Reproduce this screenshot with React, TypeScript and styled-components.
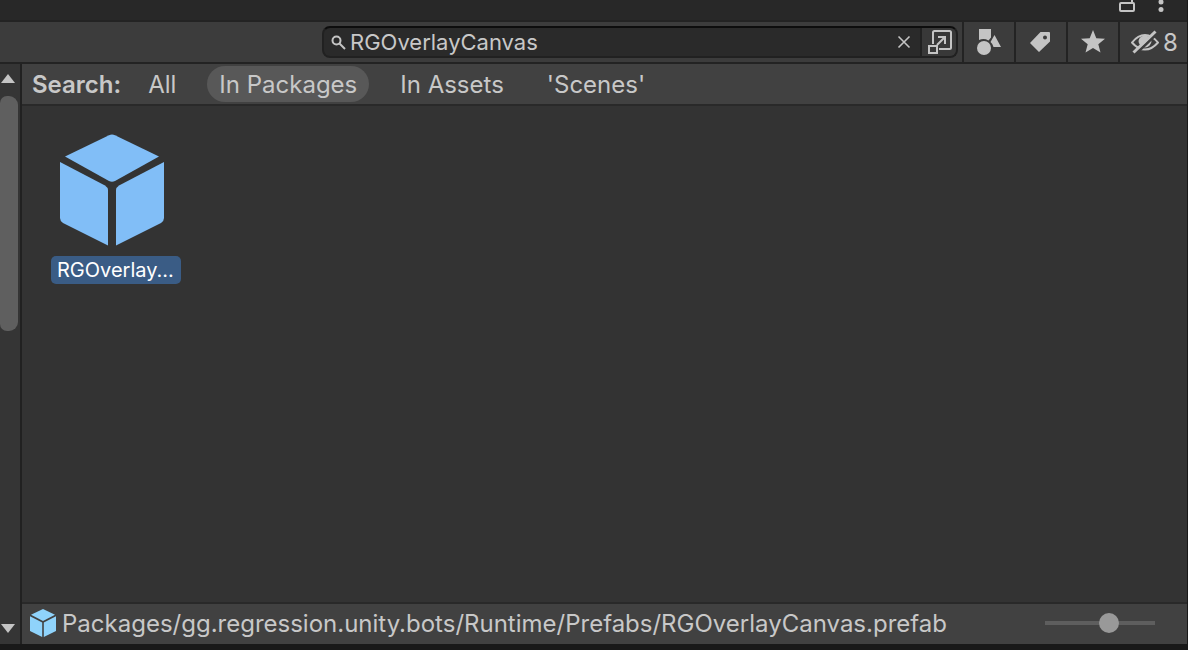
import React, { useState } from "react";
import styled, { createGlobalStyle } from "styled-components";

const GlobalStyle = createGlobalStyle`
  * { box-sizing: border-box; }
  body { margin: 0; background: #191919; }
  button, input { font: inherit; color: inherit; margin: 0; }
  button { border: 0; padding: 0; background: none; cursor: pointer; }
`;

const Window = styled.main`
  display: flex;
  flex-direction: column;
  min-height: 100vh;
  border-right: 1px solid #191919;
  border-bottom: 6px solid #191919;
  background: #333333;
  color: #c8c8c8;
  font: 400 24px/32px Inter, sans-serif;
`;

const TitleBar = styled.header`
  display: flex;
  justify-content: flex-end;
  gap: 15px;
  height: 22px;
  padding-right: 16px;
  background: #282828;
  border-bottom: 2px solid #232323;
`;

const TitleButton = styled.button`
  display: flex;
  height: 16px;
`;

const Toolbar = styled.div`
  display: flex;
  height: 42px;
  padding-left: 6px;
  background: #3c3c3c;
  border-bottom: 2px solid #232323;
`;

const Spacer = styled.div`
  flex: 1 1 0;
`;

const SearchField = styled.div`
  display: flex;
  flex: 2 1 0;
  align-items: center;
  height: 32px;
  margin: 4px 4px 0 0;
  overflow: hidden;
  background: #2a2a2a;
  border: 2px solid #212121;
  border-top-color: #0d0d0d;
  border-radius: 8px;
`;

const SearchLabel = styled.label`
  display: flex;
  flex: 1;
  align-items: center;
  gap: 4px;
  padding-left: 7px;
`;

const SearchInput = styled.input`
  flex: 1;
  min-width: 0;
  height: 28px;
  padding: 0;
  border: 0;
  outline: 0;
  background: transparent;
  font-size: 22px;
`;

const ClearButton = styled.button`
  display: flex;
  align-items: center;
  justify-content: center;
  width: 32px;
  height: 28px;
`;

const PopOutButton = styled.button`
  display: flex;
  align-items: center;
  justify-content: flex-end;
  width: 36px;
  height: 28px;
  padding-right: 4px;
  background: #383838;
  border-left: 2px solid #212121;
`;

const ToolButton = styled.button<{ $wide?: boolean }>`
  display: flex;
  flex: none;
  align-items: center;
  justify-content: center;
  gap: 4px;
  width: ${(p) => (p.$wide ? 69 : 52)}px;
  height: 40px;
  padding-left: ${(p) => (p.$wide ? 2 : 0)}px;
  border-left: 2px solid #232323;
`;

const HiddenCount = styled.span`
  padding-top: 2px;
`;

const Body = styled.div`
  display: flex;
  flex: 1;
`;

const ScrollRail = styled.aside`
  display: flex;
  flex-direction: column;
  justify-content: space-between;
  width: 22px;
  padding: 10px 0;
  background: #353535;
  border-right: 2px solid #212121;
`;

const ArrowButton = styled.button`
  display: flex;
  height: 10px;
`;

const ScrollThumb = styled.div`
  flex: none;
  width: 18px;
  height: 42%;
  margin: 12px 0 auto;
  background: #5f5f5f;
  border-radius: 7px 9px 9px 7px;
`;

const Column = styled.section`
  display: flex;
  flex: 1;
  flex-direction: column;
  min-width: 0;
`;

const FilterBar = styled.nav`
  display: flex;
  align-items: center;
  height: 42px;
  padding-left: 10px;
  gap: 19px;
  background: #414141;
  border-bottom: 2px solid #292929;
`;

const FilterTitle = styled.strong`
  padding-top: 2px;
  font-weight: 600;
  margin-right: -4px;
`;

const FilterButton = styled.button<{ $active: boolean }>`
  height: 36px;
  padding: 2px 12px 0;
  border-radius: 18px;
  background: ${(p) => (p.$active ? "#585858" : "transparent")};
`;

const Grid = styled.div`
  display: flex;
  flex: 1;
  flex-wrap: wrap;
  align-content: flex-start;
  padding: 28px;
`;

const Asset = styled.button`
  display: flex;
  flex-direction: column;
  gap: 10px;
  width: 132px;
  padding-left: 1px;
`;

const AssetPreview = styled.span`
  display: flex;
  padding-left: 9px;
`;

const AssetName = styled.span`
  width: 130px;
  padding: 0 6px;
  overflow: hidden;
  background: #3a5c85;
  border-radius: 5px;
  color: #ffffff;
  font-size: 20px;
  line-height: 28px;
  text-align: left;
  white-space: nowrap;
`;

const StatusBar = styled.footer`
  display: flex;
  align-items: center;
  height: 42px;
  padding: 0 32px 2px 8px;
  gap: 6px;
  background: #414141;
  border-top: 2px solid #292929;
`;

const AssetPath = styled.span`
  flex: 1;
  padding-top: 2px;
  overflow: hidden;
  white-space: nowrap;
  text-overflow: ellipsis;
`;

const SizeSlider = styled.input`
  appearance: none;
  width: 110px;
  height: 20px;
  background: transparent;

  &::-webkit-slider-runnable-track {
    height: 4px;
    background: #5e5e5e;
  }
  &::-webkit-slider-thumb {
    appearance: none;
    width: 20px;
    height: 20px;
    margin-top: -8px;
    border-radius: 50%;
    background: #999999;
  }
`;

const PrefabIcon = ({ large = false }: { large?: boolean }) =>
  large ? (
    <svg width="104" height="112" viewBox="0 0 104 112" fill="#81bef7" aria-hidden="true">
      <path d="M49 1.200Q52 0 55 1.200L99 22.500L55 47Q52 48.600 49 47L5 22.500Z" />
      <path d="M0 28L45 51.500Q48 53.500 48 56V111.500L3 89Q0 87 0 84Z" />
      <path d="M104 28L59 51.500Q56 53.500 56 56V111.500L101 89Q104 87 104 84Z" />
    </svg>
  ) : (
    <svg width="26" height="28" viewBox="0 0 26 28" fill="#8fd3fb" aria-hidden="true">
      <path d="M13 0L25 5.700L13 12L1 5.700Z" />
      <path d="M0 7.200L12.200 13.500V28L0 22Z" />
      <path d="M26 7.200L13.800 13.500V28L26 22Z" />
    </svg>
  );

const filters = ["All", "In Packages", "In Assets", "'Scenes'"];

export default function App() {
  const [query, setQuery] = useState("RGOverlayCanvas");
  const [filter, setFilter] = useState("In Packages");
  const [size, setSize] = useState(60);

  return (
    <>
      <GlobalStyle />
      <Window>
        <TitleBar>
          <TitleButton aria-label="Lock">
            <svg width="18" height="14" viewBox="0 0 18 14" fill="none" stroke="#c4c4c4" strokeWidth="2">
              <rect x="2" y="3" width="14" height="8" rx="1" />
              <path d="M14 3V0" />
            </svg>
          </TitleButton>
          <TitleButton aria-label="More options">
            <svg width="20" height="14" viewBox="0 0 20 14" fill="#c4c4c4">
              <circle cx="10" cy="2" r="2.500" />
              <circle cx="10" cy="9.500" r="2.500" />
            </svg>
          </TitleButton>
        </TitleBar>
        <Toolbar>
          <Spacer />
          <SearchField>
            <SearchLabel>
              <svg width="15" height="15" viewBox="0 0 15 15" fill="none" stroke="#c4c4c4" strokeWidth="2">
                <circle cx="5.500" cy="5.500" r="4" />
                <path d="M8.500 8.500L14 14" />
              </svg>
              <SearchInput aria-label="Search assets" value={query} onChange={(e) => setQuery(e.target.value)} />
            </SearchLabel>
            <ClearButton aria-label="Clear search" onClick={() => setQuery("")}>
              <svg width="14" height="14" viewBox="0 0 14 14" stroke="#c4c4c4" strokeWidth="1.600">
                <path d="M1.500 1.500L12.500 12.500M12.500 1.500L1.500 12.500" />
              </svg>
            </ClearButton>
            <PopOutButton aria-label="Open in search window">
              <svg width="24" height="24" viewBox="0 0 24 24" fill="none" stroke="#c4c4c4" strokeWidth="2">
                <path d="M5 14V2.500Q5 1 6.500 1H21.500Q23 1 23 2.500V17.500Q23 19 21.500 19H11" />
                <rect x="1" y="16" width="8" height="7" />
                <path d="M9 15L17 7M10 7H17V14" />
              </svg>
            </PopOutButton>
          </SearchField>
          <ToolButton aria-label="Search by type">
            <svg width="24" height="26" viewBox="0 0 24 26" fill="#c4c4c4">
              <path d="M2 0H14V8.500L11.500 11.500Q7 9 2 11Z" />
              <path d="M17.500 6L24 18H16.500Q15.500 14.500 13.500 13Z" />
              <circle cx="7" cy="19" r="7" />
            </svg>
          </ToolButton>
          <ToolButton aria-label="Search by label">
            <svg width="22" height="20" viewBox="0 0 22 20" fill="#c4c4c4">
              <path fillRule="evenodd" d="M10.500 0H19Q20 0 20 1V9.500L9 20L0 11ZM15 3.500A2 2 0 1 0 15 7.500A2 2 0 0 0 15 3.500Z" />
            </svg>
          </ToolButton>
          <ToolButton aria-label="Save search">
            <svg width="24" height="24" viewBox="0 0 24 24" fill="#c4c4c4">
              <path d="M12 0L15.300 8.200L24 8.800L17.300 14.300L19.500 22.500L12 18L4.500 22.500L6.700 14.300L0 8.800L8.700 8.200Z" />
            </svg>
          </ToolButton>
          <ToolButton $wide aria-label="Hidden packages: 8">
            <svg width="28" height="24" viewBox="0 0 28 24" fill="none" stroke="#c4c4c4" strokeWidth="2">
              <path d="M1 12.500Q7 5 14 5Q21 5 27 12.500Q21 19.500 14 19.500Q7 19.500 1 12.500Z" />
              <path d="M14 5.500A6.500 6.500 0 0 1 20.500 11A6.500 6.500 0 0 1 14 17.500A6.500 6.500 0 0 1 7.500 11A6.500 6.500 0 0 1 14 5.500Z" fill="#c4c4c4" stroke="none" />
              <path d="M4.500 24L26.500 3" stroke="#3c3c3c" strokeWidth="3" />
              <path d="M2.500 22.500L24.500 1.500" strokeWidth="3" />
            </svg>
            <HiddenCount>8</HiddenCount>
          </ToolButton>
        </Toolbar>
        <Body>
          <ScrollRail>
            <ArrowButton aria-label="Scroll up">
              <svg width="16" height="10" viewBox="0 0 16 10" fill="#c4c4c4"><path d="M1 9L8 0L15 9Z" /></svg>
            </ArrowButton>
            <ScrollThumb />
            <ArrowButton aria-label="Scroll down">
              <svg width="16" height="10" viewBox="0 0 16 10" fill="#c4c4c4"><path d="M1 0L8 9L15 0Z" /></svg>
            </ArrowButton>
          </ScrollRail>
          <Column>
            <FilterBar>
              <FilterTitle>Search:</FilterTitle>
              {filters.map((name) => (
                <FilterButton key={name} $active={name === filter} onClick={() => setFilter(name)}>
                  {name}
                </FilterButton>
              ))}
            </FilterBar>
            <Grid>
              <Asset>
                <AssetPreview>
                  <PrefabIcon large />
                </AssetPreview>
                <AssetName>RGOverlay...</AssetName>
              </Asset>
            </Grid>
            <StatusBar>
              <PrefabIcon />
              <AssetPath>Packages/gg.regression.unity.bots/Runtime/Prefabs/RGOverlayCanvas.prefab</AssetPath>
              <SizeSlider
                type="range"
                aria-label="Icon size"
                value={size}
                onChange={(e) => setSize(Number(e.target.value))}
              />
            </StatusBar>
          </Column>
        </Body>
      </Window>
    </>
  );
}
